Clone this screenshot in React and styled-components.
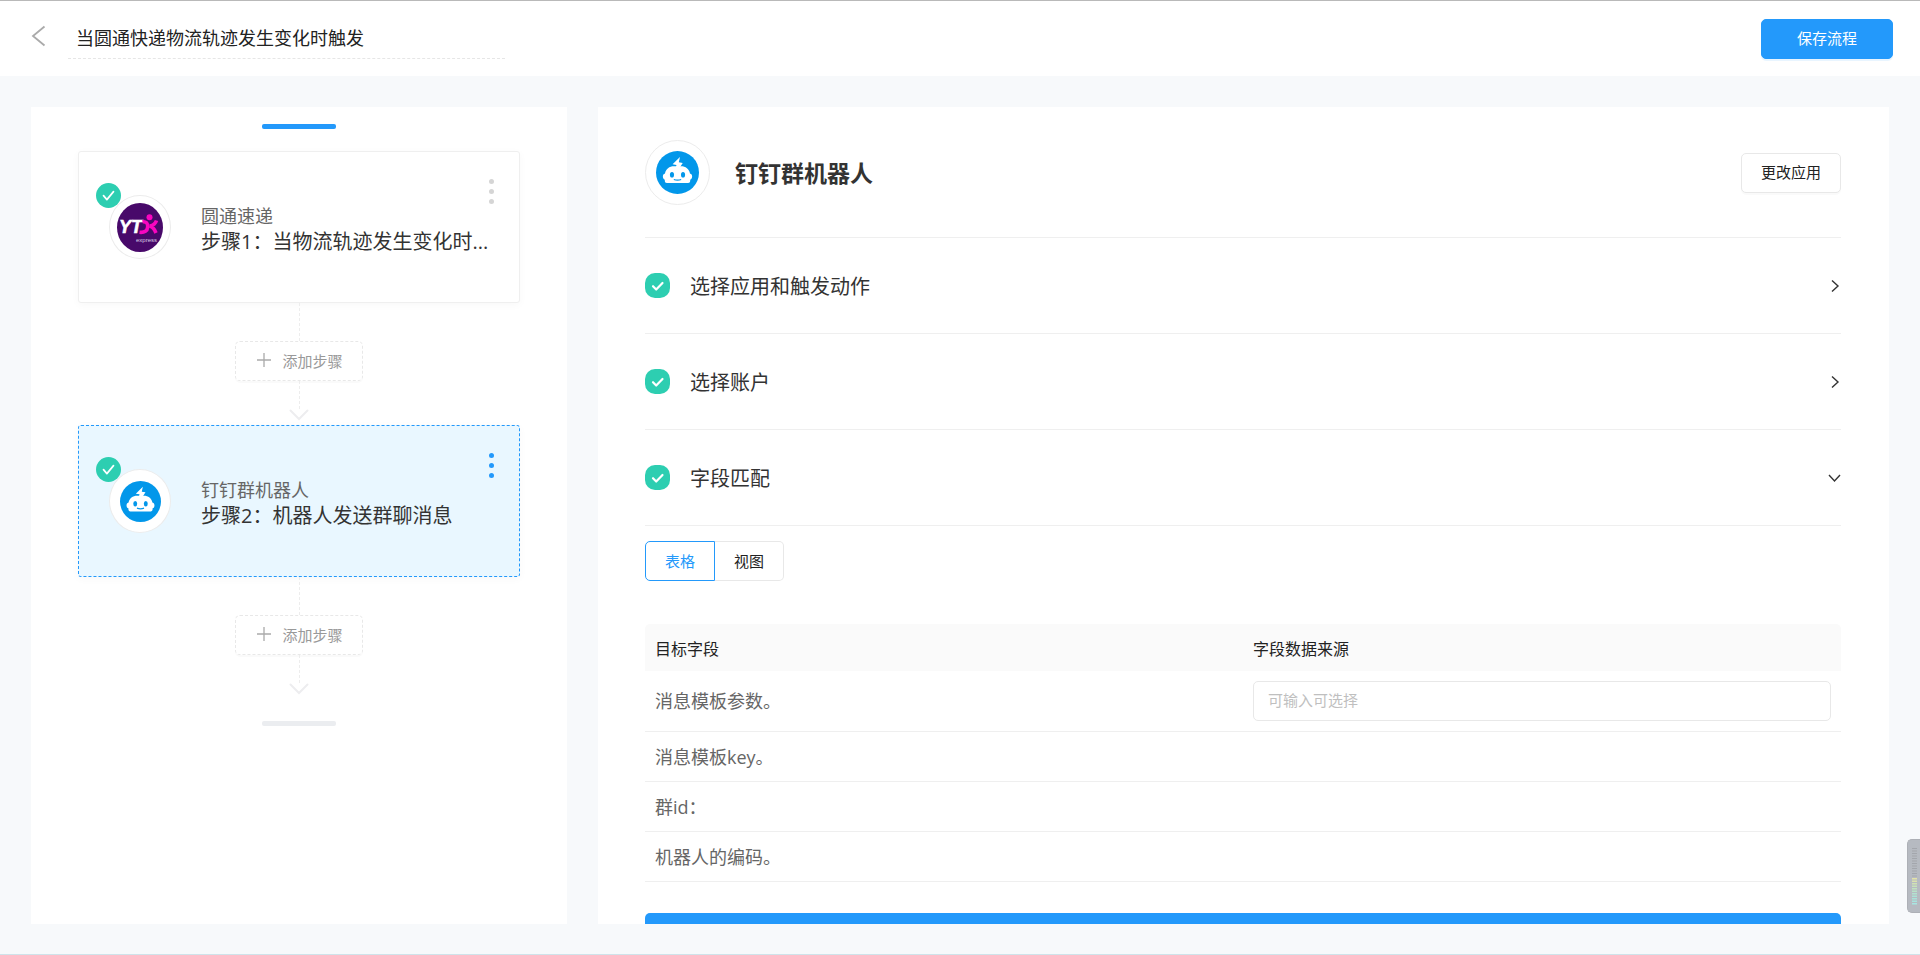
import React, { Component } from "react";
import styled, { createGlobalStyle } from "styled-components";

const GlobalStyle = createGlobalStyle`
  * {
    box-sizing: border-box;
  }
  body {
    margin: 0;
    overflow: hidden;
  }
  body, button, input, table {
    font-family: "Open Sans", "Noto Sans CJK SC", sans-serif;
  }
`;

const PageStyle = styled.div`
  height: 100vh;
  display: flex;
  flex-direction: column;
  background-color: #f7f9fb;
  border-top: 1px solid #b9b9b9;
  border-bottom: 1px solid #cfe3ea;
`;

const HeaderStyle = styled.header`
  display: flex;
  align-items: center;
  height: 75px;
  flex: none;
  padding: 0 27px 0 31px;
  background-color: #fff;
`;

const BackStyle = styled.button`
  display: flex;
  width: 15px;
  height: 22px;
  margin: 0 22px 5px 0;
  padding: 0;
  border: 0;
  background: none;
`;

const TitleInputStyle = styled.input`
  width: 437px;
  height: 40px;
  margin-right: auto;
  padding: 0 8px 2px;
  border: 0;
  border-bottom: 1px dashed #e6e6e6;
  background: none;
  color: #222;
  font-size: 18px;
  outline: none;
`;

const ButtonStyle = styled.button`
  height: 40px;
  padding: 0 ${(props) => (props.$primary ? 35 : 19)}px 2px;
  border: 1px solid ${(props) => (props.$primary ? "#2399fb" : "#e8e8e8")};
  border-radius: 5px;
  background-color: ${(props) => (props.$primary ? "#2399fb" : "#fff")};
  color: ${(props) => (props.$primary ? "#fff" : "#222")};
  box-shadow: 0 2px 0
    ${(props) => (props.$primary ? "rgba(35, 153, 251, 0.1)" : "rgba(0, 0, 0, 0.02)")};
  font-size: 15px;
  line-height: 22px;
`;

const MainStyle = styled.main`
  flex: 1;
  min-height: 0;
  display: grid;
  grid-template-columns: 536px minmax(0, 1fr);
  gap: 31px;
  padding: 31px 31px 30px;
`;

const FlowStyle = styled.section`
  display: flex;
  flex-direction: column;
  align-items: center;
  padding: 17px 47px;
  background-color: #fff;
  overflow: hidden;
`;

const EndBarStyle = styled.div`
  width: 74px;
  height: 5px;
  margin: ${(props) => (props.$active ? "0 0 22px" : "22px 0 0")};
  border-radius: 2px;
  background-color: ${(props) => (props.$active ? "#2399fb" : "#ebedf0")};
`;

const CardStyle = styled.article`
  display: flex;
  align-items: center;
  align-self: stretch;
  height: 152px;
  flex: none;
  padding: 0 25px 0 30px;
  border: 1px ${(props) => (props.$active ? "dashed #2399fb" : "solid #efefef")};
  border-radius: 3px;
  background-color: ${(props) => (props.$active ? "#e9f7ff" : "#fff")};
  box-shadow: 0 2px 8px rgba(0, 0, 0, 0.03);
`;

const AvatarStyle = styled.div`
  position: relative;
  display: flex;
  align-items: center;
  justify-content: center;
  flex: none;
  width: ${(props) => (props.$large ? 65 : 62)}px;
  height: ${(props) => (props.$large ? 65 : 64)}px;
  border: 1px solid #ececec;
  border-radius: 50%;
  background-color: #fff;
`;

const BadgeStyle = styled.span`
  position: absolute;
  top: -13px;
  left: -14px;
  width: 25px;
  height: 25px;
`;

const CardTextStyle = styled.div`
  flex: 1;
  min-width: 0;
  margin-left: 30px;
  padding-top: 3px;
  white-space: nowrap;
`;

const AppNameStyle = styled.p`
  margin: 0;
  color: #666;
  font-size: 18px;
  line-height: 26px;
`;

const StepNameStyle = styled.h3`
  margin: 0;
  color: #333;
  font-size: 20px;
  font-weight: 400;
  line-height: 26px;
`;

const MoreStyle = styled.button`
  display: flex;
  flex-direction: column;
  gap: 5px;
  align-self: flex-start;
  margin-top: 27px;
  padding: 0;
  border: 0;
  background: none;
  color: ${(props) => (props.$active ? "#2399fb" : "#d5d5d5")};
`;

const DotStyle = styled.span`
  width: 5px;
  height: 5px;
  border-radius: 50%;
  background-color: currentColor;
`;

const LineStyle = styled.div`
  width: 1px;
  height: ${(props) => props.$length}px;
  flex: none;
  background: repeating-linear-gradient(#ededed 0 3px, transparent 3px 5px);
`;

const AddStyle = styled.button`
  display: flex;
  align-items: center;
  justify-content: center;
  gap: 11px;
  width: 128px;
  height: 40px;
  flex: none;
  padding: 0 0 2px 2px;
  border: 1px dashed #e8e8e8;
  border-radius: 5px;
  background-color: #fff;
  box-shadow: 0 2px 0 rgba(0, 0, 0, 0.02);
  color: #999;
  font-size: 15px;
`;

const ArrowStyle = styled.div`
  display: flex;
  flex-direction: column;
  align-items: center;
  height: 44px;
  flex: none;

  svg {
    margin-top: -2px;
  }
`;

const DetailStyle = styled.section`
  padding: 33px 48px 0 47px;
  background-color: #fff;
  overflow: hidden;
`;

const DetailHeadStyle = styled.div`
  display: flex;
  align-items: center;
  padding-bottom: 32px;
  border-bottom: 1px solid #efefef;
`;

const DetailTitleStyle = styled.h1`
  margin: 0 auto 0 25px;
  color: #333;
  font-size: 23px;
  line-height: 30px;
`;

const PanelHeadStyle = styled.button`
  display: flex;
  align-items: center;
  gap: 20px;
  width: 100%;
  height: 96px;
  padding: 0;
  border: 0;
  border-bottom: 1px solid #efefef;
  background: none;
  color: #333;
  font-size: 20px;
  line-height: 30px;
  text-align: left;

  > span {
    padding-top: 2px;
  }
  > :last-child {
    margin-left: auto;
  }
`;

const TabsStyle = styled.div`
  display: flex;
  margin: 15px 0 43px;
`;

const TabStyle = styled.button`
  width: ${(props) => (props.$active ? 70 : 69)}px;
  height: 40px;
  padding: 0 0 2px;
  border: 1px solid ${(props) => (props.$active ? "#2399fb" : "#e8e8e8")};
  border-left-width: ${(props) => (props.$active ? 1 : 0)}px;
  border-radius: ${(props) => (props.$active ? "5px 0 0 5px" : "0 5px 5px 0")};
  background-color: #fff;
  color: ${(props) => (props.$active ? "#2399fb" : "#222")};
  font-size: 15px;
`;

const TableStyle = styled.table`
  width: 100%;
  table-layout: fixed;
  border-collapse: separate;
  border-spacing: 0;
  text-align: left;
`;

const ThStyle = styled.th`
  height: 47px;
  padding: 0 10px;
  background-color: #fafafa;
  color: #222;
  font-size: 16px;
  font-weight: 400;

  &:first-child {
    border-top-left-radius: 5px;
  }
  &:last-child {
    border-top-right-radius: 5px;
  }
`;

const TdStyle = styled.td`
  height: 50px;
  padding: 10px;
  border-bottom: 1px solid #efefef;
  color: #666;
  font-size: 18px;
  line-height: 26px;
`;

const FieldInputStyle = styled.input`
  display: block;
  width: 100%;
  height: 40px;
  padding: 0 14px 2px;
  border: 1px solid #e8e8e8;
  border-radius: 5px;
  font-size: 15px;

  &::placeholder {
    color: #bfbfbf;
  }
`;

const SubmitStyle = styled.button`
  display: block;
  width: 100%;
  height: 50px;
  margin-top: 31px;
  border: 0;
  border-radius: 5px;
  background-color: #2399fb;
`;

const MeterStyle = styled.div`
  position: fixed;
  right: 0;
  bottom: 42px;
  width: 13px;
  height: 74px;
  border: 1px solid #adb0b6;
  border-right: 0;
  border-radius: 5px 0 0 5px;
  background-color: #b6bac1;
`;

const CheckIcon = ({ square }) => (
  <svg width="25" height="25" viewBox="0 0 25 25" fill="none" style={{ display: "block" }}>
    <rect width="25" height="25" rx={square ? 10 : 12.5} fill="#2dceb1" />
    <path
      d={square ? "M8 13.2l3.2 3.3 6.3-6.5" : "M7.5 12.6l3.4 4 6.6-8"}
      stroke="#fff"
      strokeWidth={square ? 2.2 : 1.7}
      strokeLinecap="round"
      strokeLinejoin="round"
    />
  </svg>
);

const RobotIcon = ({ size }) => (
  <svg width={size} height={size} viewBox="0 0 42 42">
    <circle cx="21" cy="21" r="21" fill="#0297ea" />
    <path d="M23.4 5.8L16.2 13l3.8.6-.9 3.4h3.6l3.4-5.4-3.8-.6z" fill="#fff" />
    <path
      d="M8.800 22c.8-4.400 4.200-7 8.800-7h6.800c4.600 0 8 2.600 8.800 7 1.500.3 2.100 1.500 2.100 3s-.7 2.700-1.900 3v1c0 1.300-.8 2.200-2 2.200H10.600c-1.200 0-2-.9-2-2.200v-1c-1.200-.3-1.900-1.500-1.900-3s.6-2.700 2.100-3z"
      fill="#fff"
    />
    <ellipse cx="15.600" cy="23.200" rx="2" ry="2.800" fill="#0297ea" />
    <ellipse cx="26.400" cy="23.200" rx="2" ry="2.800" fill="#0297ea" />
    <path d="M17.400 27.800q3.600 1.400 7.200 0" stroke="#0297ea" strokeWidth="1.200" fill="none" />
  </svg>
);

const YtoIcon = () => (
  <svg width="46" height="49" viewBox="0 0 46 49">
    <ellipse cx="23" cy="24.500" rx="23" ry="24.500" fill="#48096a" />
    <text
      x="2"
      y="30"
      fill="#fff"
      stroke="#fff"
      strokeWidth="0.600"
      fontFamily="Liberation Sans, sans-serif"
      fontSize="18"
      fontWeight="700"
      fontStyle="italic"
    >
      YT
    </text>
    <circle cx="32.500" cy="14.300" r="3" fill="#f806c0" />
    <path
      d="M25.500 18.800c3.500-.6 5.500 1.500 5.200 5.200-.3 3.800-3 5.800-8.200 5.300M39.500 17.500c-1 3.200-3 4.800-6.500 5.500 3.800 1.200 4.500 3.500 6 7"
      stroke="#f806c0"
      strokeWidth="3.600"
      fill="none"
    />
    <text x="19" y="39" fill="#d9c9e2" fontFamily="Liberation Sans, sans-serif" fontSize="6">
      express
    </text>
  </svg>
);

const Chevron = ({ down }) => (
  <svg width="14" height="14" viewBox="0 0 14 14" fill="none" stroke="#333" strokeWidth="1.400">
    <path d={down ? "M2 4l5.500 6L13 4" : "M5 1.500L11 7l-6 5.500"} />
  </svg>
);

const Connector = () => (
  <>
    <LineStyle $length={38} />
    <AddStyle>
      <svg width="14" height="14" viewBox="0 0 14 14" stroke="#aaa" strokeWidth="1.300">
        <path d="M7 0v14M0 7h14" />
      </svg>
      添加步骤
    </AddStyle>
    <ArrowStyle>
      <LineStyle $length={30} />
      <svg width="20" height="12" viewBox="0 0 20 12" fill="none">
        <path
          d="M1.500 1.500L10 10l8.500-8.500"
          stroke="#ededef"
          strokeWidth="2"
          strokeLinecap="round"
        />
      </svg>
    </ArrowStyle>
  </>
);

const steps = [
  { app: "圆通速递", name: "步骤1：当物流轨迹发生变化时...", icon: <YtoIcon /> },
  { app: "钉钉群机器人", name: "步骤2：机器人发送群聊消息", icon: <RobotIcon size={41} />, active: true },
];

const panels = [
  { id: "app", title: "选择应用和触发动作" },
  { id: "account", title: "选择账户" },
  { id: "fields", title: "字段匹配", open: true },
];

const fields = ["消息模板参数。", "消息模板key。", "群id：", "机器人的编码。"];

const meterColors = ["#e3e3a8", "#dbe2ae", "#d0e2b4", "#c8e2ba", "#c0e2c0", "#b8e2c8", "#b2e2d0", "#ace2d6", "#a8e2da", "#a8e4de", "#a8e6e2"];

class Flow extends Component {
  render() {
    return (
      <FlowStyle>
        <EndBarStyle $active />
        {this.props.steps.map((step) => (
          <React.Fragment key={step.app}>
            <CardStyle $active={step.active}>
              <AvatarStyle>
                {step.icon}
                <BadgeStyle>
                  <CheckIcon />
                </BadgeStyle>
              </AvatarStyle>
              <CardTextStyle>
                <AppNameStyle>{step.app}</AppNameStyle>
                <StepNameStyle>{step.name}</StepNameStyle>
              </CardTextStyle>
              <MoreStyle $active={step.active}>
                <DotStyle />
                <DotStyle />
                <DotStyle />
              </MoreStyle>
            </CardStyle>
            <Connector />
          </React.Fragment>
        ))}
        <EndBarStyle />
      </FlowStyle>
    );
  }
}

class Detail extends Component {
  render() {
    return (
      <DetailStyle>
        <DetailHeadStyle>
          <AvatarStyle $large>
            <RobotIcon size={43} />
          </AvatarStyle>
          <DetailTitleStyle>钉钉群机器人</DetailTitleStyle>
          <ButtonStyle>更改应用</ButtonStyle>
        </DetailHeadStyle>
        {panels.map((panel) => (
          <PanelHeadStyle key={panel.id} aria-expanded={!!panel.open}>
            <CheckIcon square />
            <span id={panel.id}>{panel.title}</span>
            <Chevron down={panel.open} />
          </PanelHeadStyle>
        ))}
        <TabsStyle>
          <TabStyle $active>表格</TabStyle>
          <TabStyle>视图</TabStyle>
        </TabsStyle>
        <TableStyle>
          <thead>
            <tr>
              <ThStyle>目标字段</ThStyle>
              <ThStyle>字段数据来源</ThStyle>
            </tr>
          </thead>
          <tbody>
            {fields.map((field, i) => (
              <tr key={field}>
                <TdStyle>
                  {i === 0 ? <label htmlFor="source">{field}</label> : field}
                </TdStyle>
                <TdStyle>
                  {i === 0 && <FieldInputStyle id="source" placeholder="可输入可选择" />}
                </TdStyle>
              </tr>
            ))}
          </tbody>
        </TableStyle>
        <SubmitStyle aria-labelledby="fields" />
      </DetailStyle>
    );
  }
}

class App extends Component {
  render() {
    return (
      <PageStyle>
        <GlobalStyle />
        <HeaderStyle>
          <BackStyle aria-labelledby="flow-title">
            <svg width="15" height="22" viewBox="0 0 15 22" fill="none">
              <path d="M13.500 1.500L2 11l11.500 9.500" stroke="#aaa" strokeWidth="1.800" />
            </svg>
          </BackStyle>
          <TitleInputStyle id="flow-title" defaultValue="当圆通快递物流轨迹发生变化时触发" />
          <ButtonStyle $primary>保存流程</ButtonStyle>
        </HeaderStyle>
        <MainStyle>
          <Flow steps={steps} />
          <Detail />
        </MainStyle>
        <MeterStyle>
          <svg width="12" height="72" viewBox="0 0 12 72">
            {Array.from({ length: 12 }, (_, i) => (
              <rect key={i} x="4" y={8 + i * 2.5} width="5" height="1" fill="#a3a6ac" />
            ))}
            {meterColors.map((color, i) => (
              <rect key={color} x="4" y={38 + i * 2.5} width="5" height="1.500" fill={color} />
            ))}
          </svg>
        </MeterStyle>
      </PageStyle>
    );
  }
}

export default App;
